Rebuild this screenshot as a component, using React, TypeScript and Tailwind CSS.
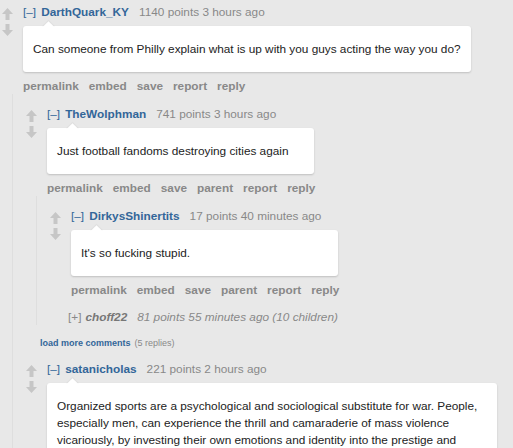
import React from "react";

const Arrow = ({ down }: { down?: boolean }) => (
  <svg
    width="11"
    height="12"
    viewBox="0 0 11 12"
    className={down ? "rotate-180 block" : "block"}
  >
    <path d="M5.5 0L11 6H7.5V12H3.5V6H0Z" fill="#c6c6c6" />
  </svg>
);

type CommentProps = {
  author: string;
  meta: string;
  text: React.ReactNode;
  buttons: string[];
  children?: React.ReactNode;
  className?: string;
};

function Comment({ author, meta, text, buttons, children, className }: CommentProps) {
  return (
    <div className={className}>
      <div className="flex">
        <div className="flex w-[23px] shrink-0 flex-col gap-[4px] pl-[2px] pt-[4px]">
          <Arrow />
          <Arrow down />
        </div>
        <div className="flex min-w-0 flex-col items-start">
          <div className="flex h-[16px] items-center whitespace-nowrap text-[11.8px] leading-[16px]">
            <span className="text-[#369]">[–]</span>
            <span className="ml-[5px] font-bold text-[#369]">{author}</span>
            <span className="ml-[10px] text-[#888]">{meta}</span>
          </div>
          <div className="relative mt-[6px] min-w-[267px] max-w-[450px] rounded-[3px] bg-white px-[10px] pb-[14px] pt-[15px] text-[11.8px] leading-[17px] text-[#222] shadow-[0_1px_2px_rgba(0,0,0,0.18)]">
            <span className="absolute left-[20.5px] top-[-3.5px] h-[9px] w-[9px] rotate-45 bg-white shadow-[-1px_-1px_1px_rgba(0,0,0,0.04)]" />
            <span className="relative">{text}</span>
          </div>
          <div className="mt-[6px] flex h-[16px] gap-[10px] whitespace-nowrap text-[11.8px] font-bold leading-[16px] text-[#888]">
            {buttons.map((b) => (
              <span key={b}>{b}</span>
            ))}
          </div>
        </div>
      </div>
      {children && (
        <div className="ml-[12px] border-l border-[#dedede] pl-[11px]">{children}</div>
      )}
    </div>
  );
}

export default function App() {
  return (
    <div
      className="h-[448px] w-[513px] overflow-hidden bg-[#e8e8e8] pt-[4px]"
      style={{ fontFamily: '"Liberation Sans", Arial, sans-serif' }}
    >
      <Comment
        author="DarthQuark_KY"
        meta="1140 points 3 hours ago"
        text="Can someone from Philly explain what is up with you guys acting the way you do?"
        buttons={["permalink", "embed", "save", "report", "reply"]}
      >
        <Comment
          className="pt-[12px]"
          author="TheWolphman"
          meta="741 points 3 hours ago"
          text="Just football fandoms destroying cities again"
          buttons={["permalink", "embed", "save", "parent", "report", "reply"]}
        >
          <Comment
            className="pt-[12px]"
            author="DirkysShinertits"
            meta="17 points 40 minutes ago"
            text="It's so fucking stupid."
            buttons={["permalink", "embed", "save", "parent", "report", "reply"]}
          />
          <div className="mt-[11px] flex h-[16px] items-center whitespace-nowrap pl-[20px] text-[11.8px] leading-[16px] text-[#888]">
            <span>[+]</span>
            <span className="ml-[4px] font-bold italic text-[#777]">choff22</span>
            <span className="ml-[10px] italic">81 points 55 minutes ago (10 children)</span>
          </div>
        </Comment>
        <div className="mt-[12px] flex h-[12px] items-center gap-[4px] whitespace-nowrap pl-[16px] text-[9px] leading-[12px]">
          <span className="font-bold text-[#369]">load more comments</span>
          <span className="text-[#888]">(5 replies)</span>
        </div>
        <Comment
          className="pt-[12px]"
          author="satanicholas"
          meta="221 points 2 hours ago"
          text="Organized sports are a psychological and sociological substitute for war. People, especially men, can experience the thrill and camaraderie of mass violence vicariously, by investing their own emotions and identity into the prestige and"
          buttons={["permalink", "embed", "save", "parent", "report", "reply"]}
        />
      </Comment>
    </div>
  );
}
